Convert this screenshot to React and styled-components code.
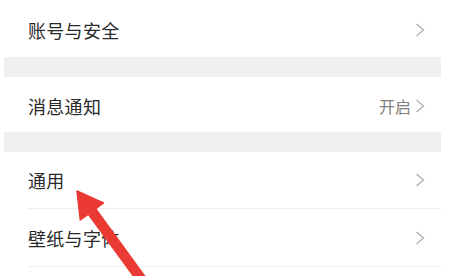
import React from 'react';
import styled, { createGlobalStyle } from 'styled-components';

const Global = createGlobalStyle`
  html, body {
    margin: 0;
    padding: 0;
    background: #fff;
  }
  body {
    font-family: 'Noto Sans CJK SC', 'Noto Sans', sans-serif;
    overflow: hidden;
  }
`;

const Screen = styled.div`
  position: relative;
  width: 451px;
  height: 276px;
  overflow: hidden;
  background: #fff;
`;

const List = styled.div`
  display: flex;
  flex-direction: column;
  margin-left: 4px;
  width: 437px;
`;

const Gap = styled.div`
  height: 20px;
  background: #f0f0f0;
`;

const Row = styled.div`
  display: flex;
  background: #fff;
  padding-left: 24px;
`;

const RowInner = styled.div`
  flex: 1;
  display: flex;
  align-items: center;
  height: ${p => p.$h || 57}px;
  box-sizing: border-box;
  padding: ${p => p.$shift || 0}px 16px 0 0;
  border-bottom: ${p => (p.$line ? '1px solid #eeeeee' : 'none')};
`;

const Label = styled.span`
  flex: 1;
  font-size: 18px;
  line-height: 24px;
  color: #2a2a2a;
  letter-spacing: 0.3px;
`;

const Value = styled.span`
  font-size: 16px;
  line-height: 22px;
  color: #808080;
  margin-right: 4px;
`;

const Chevron = styled.svg`
  width: 10px;
  height: 14px;
  flex: none;
`;

const Arrow = styled.svg`
  position: absolute;
  left: 0;
  top: 0;
  pointer-events: none;
`;

function Chev() {
  return (
    <Chevron viewBox="0 0 10 14">
      <path d="M1.5 1 L8.5 7 L1.5 13" fill="none" stroke="#b0b0b0" strokeWidth="1.4" />
    </Chevron>
  );
}

function Item({ label, value, h, shift, line }) {
  return (
    <Row>
      <RowInner $h={h} $shift={shift} $line={line}>
        <Label>{label}</Label>
        {value && <Value>{value}</Value>}
        <Chev />
      </RowInner>
    </Row>
  );
}

export default function App() {
  return (
    <>
      <Global />
      <Screen>
        <List>
          <Item label="账号与安全" h={57} shift={3} />
          <Gap />
          <Item label="消息通知" value="开启" h={55} shift={3} />
          <Gap />
          <Item label="通用" h={57} line />
          <Item label="壁纸与字体" h={58} line />
          <Item label="" h={40} />
        </List>
        <Arrow width="451" height="276" viewBox="0 0 451 276">
          <polygon
            points="77,191 103.5,203 95.6,208.8 152.8,287.3 145.6,292.7 88.4,214.2 80.3,220"
            fill="#ea3a33"
            stroke="#ea3a33"
            strokeWidth="1.5"
            strokeLinejoin="round"
          />
        </Arrow>
      </Screen>
    </>
  );
}
